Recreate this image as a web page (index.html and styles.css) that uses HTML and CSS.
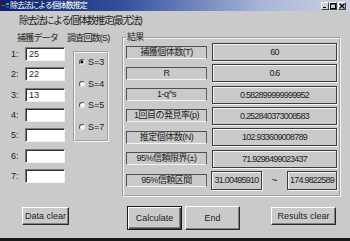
FILE: index.html
```html
<!DOCTYPE html>
<html lang="ja">
<head>
<meta charset="utf-8">
<link rel="stylesheet" href="styles.css">
</head>
<body>
<div class="window">
  <div class="titlebar">
    <svg class="appicon" viewBox="0 0 8 7" width="8" height="7">
      <rect x="0" y="3" width="5" height="1" fill="#e02020"/>
      <rect x="5" y="1" width="3" height="2" fill="#20c040"/>
      <rect x="5" y="4" width="3" height="2" fill="#2040e0"/>
    </svg>
    <span class="title">除去法による個体数推定</span>
    <div class="controls">
      <span class="ctl"><svg viewBox="0 0 6 6" width="6" height="6"><rect x="1" y="4" width="3" height="1" fill="#000"/></svg></span>
      <span class="ctl"><svg viewBox="0 0 6 6" width="6" height="6"><rect x="0.5" y="0.5" width="5" height="5" fill="none" stroke="#000" stroke-width="1"/><rect x="0" y="0" width="6" height="1.5" fill="#000"/></svg></span>
      <span class="ctl close"><svg viewBox="0 0 6 6" width="6" height="6"><path d="M0.5 0.5 L5.5 5.5 M5.5 0.5 L0.5 5.5" stroke="#000" stroke-width="1.3"/></svg></span>
    </div>
  </div>
  <div class="heading">除去法による個体数推定(最尤法)</div>
  <div class="main">
    <div class="data">
      <div class="colhead">捕獲データ</div>
      <div class="rows">
        <div class="row"><span class="num">1:</span><span class="input">25</span></div>
        <div class="row"><span class="num">2:</span><span class="input">22</span></div>
        <div class="row"><span class="num">3:</span><span class="input">13</span></div>
        <div class="row"><span class="num">4:</span><span class="input"></span></div>
        <div class="row"><span class="num">5:</span><span class="input"></span></div>
        <div class="row"><span class="num">6:</span><span class="input"></span></div>
        <div class="row"><span class="num">7:</span><span class="input"></span></div>
      </div>
    </div>
    <div class="survey">
      <div class="colhead">調査回数(S)</div>
      <div class="radioframe">
        <div class="radio"><span class="circ checked"></span>S=3</div>
        <div class="radio"><span class="circ"></span>S=4</div>
        <div class="radio"><span class="circ"></span>S=5</div>
        <div class="radio"><span class="circ"></span>S=7</div>
      </div>
    </div>
    <fieldset class="results">
      <legend>結果</legend>
      <div class="rlist">
        <div class="rrow"><span class="lbl">捕獲個体数(T)</span><span class="val">60</span></div>
        <div class="rrow"><span class="lbl">R</span><span class="val">0.6</span></div>
        <div class="rrow"><span class="lbl">1-q^s</span><span class="val">0.582899999999952</span></div>
        <div class="rrow"><span class="lbl">1回目の発見率(p)</span><span class="val">0.252840373008583</span></div>
        <div class="rrow"><span class="lbl">推定個体数(N)</span><span class="val">102.933609008789</span></div>
        <div class="rrow"><span class="lbl">95%信頼限界(±)</span><span class="val">71.9298499023437</span></div>
        <div class="rrow last"><span class="lbl">95%信頼区間</span><span class="val small">31.00495910</span><span class="tilde">~</span><span class="val small">174.9822589</span></div>
      </div>
    </fieldset>
  </div>
  <div class="buttons">
    <button class="btn data-clear">Data clear</button>
    <button class="btn calc">Calculate</button>
    <button class="btn end">End</button>
    <button class="btn rclear">Results clear</button>
  </div>
</div>
</body>
</html>
```
FILE: styles.css
```css
* { box-sizing: border-box; margin: 0; padding: 0; }
html, body { width: 350px; height: 241px; overflow: hidden; }
body {
  background: #cacaca;
  font-family: "Liberation Sans", "Noto Sans CJK JP", sans-serif;
  color: #1e1e1e;
}
.window {
  width: 350px;
  height: 241px;
  background: #cacaca;
  border-bottom: 3px solid #1a1a1a;
  display: flex;
  flex-direction: column;
}
.titlebar {
  height: 11px;
  display: flex;
  align-items: center;
  background: linear-gradient(to right, #0c2266 0%, #33509e 35%, #a9b6d8 75%, #cdd2e2 100%);
}
.appicon { margin-left: 1px; display: block; }
.title {
  font-size: 8px;
  letter-spacing: -1px;
  line-height: 11px;
  color: #fff;
  margin-left: 1px;
}
.controls { margin-left: auto; margin-right: 4px; display: flex; }
.ctl {
  width: 8px;
  height: 8px;
  background: #d0d0d0;
  border: 1px solid;
  border-color: #fff #404040 #404040 #fff;
  display: flex;
  align-items: center;
  justify-content: center;
}
.ctl svg { display: block; }
.ctl.close { margin-left: 1px; }
.heading {
  height: 19px;
  line-height: 19px;
  padding-left: 19px;
  font-size: 10px;
  letter-spacing: -1.5px;
  white-space: nowrap;
}
.main { display: flex; height: 167px; }
.colhead {
  height: 16px;
  padding-top: 1px;
  line-height: 15px;
  font-size: 9px;
  letter-spacing: -0.8px;
  white-space: nowrap;
}
.data { width: 67px; }
.data .colhead { padding-left: 17px; }
.rows { margin-top: 1px; display: flex; flex-direction: column; gap: 6.33px; }
.row { display: flex; align-items: center; height: 14px; }
.num { width: 25px; padding-left: 11px; font-size: 9px; }
.input {
  width: 40px;
  height: 14px;
  background: #fff;
  border: 1px solid;
  border-color: #7a7a7a #f2f2f2 #f2f2f2 #7a7a7a;
  box-shadow: inset 1px 1px #303030;
  font-size: 9px;
  line-height: 12px;
  padding-left: 3px;
}
.survey { width: 55px; }
.radioframe {
  margin-top: 5px;
  margin-left: 6px;
  width: 36px;
  height: 91px;
  border: 2px groove #f4f4f4;
  padding-top: 3px;
  display: flex;
  flex-direction: column;
  gap: 9.7px;
}
.radio {
  height: 12px;
  display: flex;
  align-items: center;
  font-size: 9px;
}
.circ {
  width: 6px;
  height: 6px;
  border-radius: 50%;
  background: #fff;
  border: 1px solid;
  border-color: #505050 #e8e8e8 #e8e8e8 #505050;
  margin-left: 4px;
  margin-right: 3px;
}
.circ.checked { background: radial-gradient(circle, #000 0 1.3px, #fff 1.8px); }
.results {
  width: 219px;
  height: 167px;
  border: 2px groove #f4f4f4;
  padding: 0 2px;
  min-width: 0;
}
.results legend {
  font-size: 9px;
  line-height: 15px;
  letter-spacing: -0.8px;
  padding: 0 1px;
}
.rlist { margin-top: -2px; display: flex; flex-direction: column; gap: 3.33px; }
.rrow { display: flex; align-items: center; height: 18px; gap: 5px; }
.rrow.last { height: 19px; gap: 4px; }
.lbl {
  width: 81px;
  height: 13px;
  line-height: 11px;
  text-align: center;
  font-size: 9px;
  letter-spacing: -0.5px;
  white-space: nowrap;
  border: 1px solid;
  border-color: #505050 #606060 #f4f4f4 #505050;
}
.val {
  width: 125px;
  height: 18px;
  line-height: 16px;
  text-align: center;
  font-size: 9px;
  letter-spacing: -0.8px;
  border: 1px solid #3c3c3c;
  box-shadow: inset 1px 1px #f4f4f4, 1px 1px 0 #f4f4f4;
}
.rrow.last .val { height: 19px; line-height: 17px; }
.val.small { width: 51px; }
.val.small:last-child { width: 50px; }
.tilde { width: 17px; text-align: center; font-size: 10px; }
.buttons { display: flex; align-items: flex-start; margin-top: 9px; height: 24px; }
.btn {
  font-family: "Liberation Sans", sans-serif;
  font-size: 9px;
  color: #1e1e1e;
  background: #cacaca;
  border: 1px solid;
  border-color: #fff #2a2a2a #2a2a2a #fff;
  box-shadow: inset -1px -1px #808080;
}
.data-clear { margin-left: 22px; width: 47px; height: 18px; margin-top: 1px; }
.calc {
  margin-left: 58px;
  width: 55px;
  height: 24px;
  border-color: #1a1a1a;
  box-shadow: inset 1px 1px #fff, inset -1px -1px #404040, inset -2px -2px #808080;
}
.end { margin-left: 3px; width: 55px; height: 24px; }
.rclear { margin-left: 31px; width: 65px; height: 18px; margin-top: 1px; }
```
